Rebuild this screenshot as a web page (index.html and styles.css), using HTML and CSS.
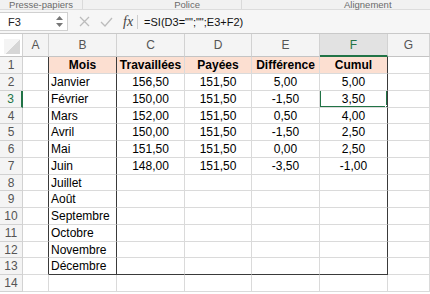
FILE: index.html
```html
<!DOCTYPE html>
<html lang="fr">
<head>
    <meta charset="UTF-8">
    <title>Heures</title>
    <link rel="stylesheet" href="styles.css">
</head>
<body>
    <div class="ribbon">
        <div class="group g1">Presse-papiers</div>
        <div class="group g2">Police</div>
        <div class="group g3">Alignement</div>
    </div>

    <div class="formula-bar">
        <div class="name-box">
            <span>F3</span>
            <svg class="spin" width="7" height="11" viewBox="0 0 7 11"><path d="M3.5 0 L7 4 L0 4 Z M0 7 L7 7 L3.5 11 Z" fill="#777"/></svg>
        </div>
        <svg class="icon cancel" width="11" height="11" viewBox="0 0 11 11"><path d="M1 1 L10 10 M10 1 L1 10" stroke="#bcbcbc" stroke-width="1.3" fill="none"/></svg>
        <svg class="icon ok" width="13" height="10" viewBox="0 0 13 10"><path d="M1 5 L5 9 L12 1" stroke="#bcbcbc" stroke-width="1.3" fill="none"/></svg>
        <span class="fx">fx</span>
        <div class="formula">=SI(D3="";"";E3+F2)</div>
    </div>

    <table class="sheet">
        <colgroup>
            <col style="width:23px"><col style="width:26px"><col style="width:68px"><col style="width:68px">
            <col style="width:67px"><col style="width:68px"><col style="width:68px"><col style="width:42px">
        </colgroup>
        <tr class="col-heads">
            <th class="corner"></th><th>A</th><th>B</th><th>C</th><th>D</th><th>E</th><th class="sel-col">F</th><th>G</th>
        </tr>
        <tr class="r17">
            <th>1</th><td class="edge"></td>
            <td class="head side">Mois</td><td class="head">Travaillées</td><td class="head">Payées</td>
            <td class="head">Différence</td><td class="head side">Cumul</td><td></td>
        </tr>
        <tr class="r17">
            <th>2</th><td class="edge"></td><td class="side">Janvier</td>
            <td class="num">156,50</td><td class="num">151,50</td><td class="num">5,00</td><td class="num side">5,00</td><td></td>
        </tr>
        <tr class="r17">
            <th class="sel-row">3</th><td class="edge"></td><td class="side">Février</td>
            <td class="num">150,00</td><td class="num">151,50</td><td class="num">-1,50</td><td class="num side active">3,50</td><td></td>
        </tr>
        <tr class="r16">
            <th>4</th><td class="edge"></td><td class="side">Mars</td>
            <td class="num">152,00</td><td class="num">151,50</td><td class="num">0,50</td><td class="num side">4,00</td><td></td>
        </tr>
        <tr class="r17">
            <th>5</th><td class="edge"></td><td class="side">Avril</td>
            <td class="num">150,00</td><td class="num">151,50</td><td class="num">-1,50</td><td class="num side">2,50</td><td></td>
        </tr>
        <tr class="r17">
            <th>6</th><td class="edge"></td><td class="side">Mai</td>
            <td class="num">151,50</td><td class="num">151,50</td><td class="num">0,00</td><td class="num side">2,50</td><td></td>
        </tr>
        <tr class="r17">
            <th>7</th><td class="edge"></td><td class="side">Juin</td>
            <td class="num">148,00</td><td class="num">151,50</td><td class="num">-3,50</td><td class="num side">-1,00</td><td></td>
        </tr>
        <tr class="r16">
            <th>8</th><td class="edge"></td><td class="side">Juillet</td>
            <td></td><td></td><td></td><td class="side"></td><td></td>
        </tr>
        <tr class="r17">
            <th>9</th><td class="edge"></td><td class="side">Août</td>
            <td></td><td></td><td></td><td class="side"></td><td></td>
        </tr>
        <tr class="r17">
            <th>10</th><td class="edge"></td><td class="side">Septembre</td>
            <td></td><td></td><td></td><td class="side"></td><td></td>
        </tr>
        <tr class="r17">
            <th>11</th><td class="edge"></td><td class="side">Octobre</td>
            <td></td><td></td><td></td><td class="side"></td><td></td>
        </tr>
        <tr class="r16">
            <th>12</th><td class="edge"></td><td class="side">Novembre</td>
            <td></td><td></td><td></td><td class="side"></td><td></td>
        </tr>
        <tr class="r17 last">
            <th>13</th><td class="edge"></td><td class="side">Décembre</td>
            <td></td><td></td><td></td><td class="side"></td><td></td>
        </tr>
        <tr class="r17">
            <th>14</th><td></td><td></td><td></td><td></td><td></td><td></td><td></td>
        </tr>
    </table>
</body>
</html>
```

FILE: styles.css
```css
:root {
    --grid: #dadada;
    --head-bg: #f4f4f4;
    --head-line: #d2d2d2;
    --dark: #3a3a3a;
    --green: #217346;
    --peach: #fcdfd1;
}

body {
    margin: 0;
    width: 430px;
    height: 294px;
    overflow: hidden;
    background: #fff;
    font-family: 'Liberation Sans', Arial, sans-serif;
}

.ribbon {
    display: flex;
    height: 9px;
    background: #f1f1f1;
    border-bottom: 1px solid #dcdcdc;
    font-size: 9.5px;
    line-height: 9px;
    color: #6a6a6a;
}

.group {
    border-right: 1px solid #dadada;
    white-space: nowrap;
}

.g1 {
    width: 82px;
    text-align: center;
}

.g2 {
    width: 159px;
    text-align: right;
    padding-right: 41px;
    box-sizing: border-box;
}

.g3 {
    flex: 1;
    padding-left: 102px;
    border-right: none;
}

.formula-bar {
    display: flex;
    align-items: center;
    height: 23px;
    background: #f6f6f6;
    border-bottom: 1px solid #c9c9c9;
}

.name-box {
    display: flex;
    align-items: center;
    justify-content: space-between;
    width: 68px;
    height: 19px;
    box-sizing: border-box;
    padding: 0 4px 0 8px;
    background: #fff;
    border: 1px solid #d0d0d0;
    border-left: none;
    font-size: 11px;
    color: #222;
}

.icon {
    display: block;
}

.cancel {
    margin-left: 11px;
}

.ok {
    margin-left: 10px;
}

.fx {
    margin-left: 10px;
    padding-right: 4px;
    border-right: 1px solid #cfcfcf;
    font-family: 'Liberation Serif', serif;
    font-style: italic;
    font-size: 14px;
    line-height: 14px;
    color: #444;
}

.formula {
    flex: 1;
    padding-left: 6px;
    font-size: 11px;
    color: #111;
    white-space: nowrap;
}

.sheet {
    table-layout: fixed;
    width: 430px;
    border-collapse: separate;
    border-spacing: 0;
    font-size: 12px;
}

.sheet th,
.sheet td {
    padding: 0 2px;
    box-sizing: border-box;
    white-space: nowrap;
    overflow: hidden;
}

.sheet td {
    border-right: 1px solid var(--grid);
    border-bottom: 1px solid var(--grid);
    color: #000;
}

.sheet th {
    background: var(--head-bg);
    border-right: 1px solid var(--head-line);
    border-bottom: 1px solid var(--head-line);
    font-weight: normal;
    color: #555;
    font-size: 12px;
}

.col-heads {
    height: 23px;
}

.col-heads th {
    border-bottom-color: #c4c4c4;
}

.corner {
    background: linear-gradient(135deg, var(--head-bg) 52%, #d6d6d6 52%) !important;
    background-size: 16px 15px !important;
    background-position: right 2px bottom 2px !important;
    background-repeat: no-repeat !important;
}

.sel-col {
    background: #e2e2e2 !important;
    color: var(--green) !important;
    border-bottom: 2px solid var(--green) !important;
}

.sel-row {
    color: var(--green) !important;
    border-right: 2px solid var(--green) !important;
}

.r17 {
    height: 17px;
}

.r16 {
    height: 16px;
}

.edge {
    border-right: 1px solid var(--dark) !important;
}

.side {
    border-right: 1px solid var(--dark) !important;
}

.head {
    background: var(--peach);
    border-right-color: var(--peach);
    border-bottom-color: var(--peach);
    font-weight: bold;
    text-align: center;
}

.num {
    text-align: center;
}

.last td:not(:first-of-type):not(:last-child) {
    border-bottom: 1px solid var(--dark);
}

.active {
    position: relative;
}

.active::before {
    content: '';
    position: absolute;
    left: -1px;
    top: -2px;
    right: -1px;
    bottom: -1px;
    border: 2px solid var(--green);
}

.active::after {
    content: '';
    position: absolute;
    right: -3px;
    bottom: -3px;
    width: 5px;
    height: 5px;
    background: var(--green);
    border: 1px solid #fff;
    box-sizing: border-box;
}
```
